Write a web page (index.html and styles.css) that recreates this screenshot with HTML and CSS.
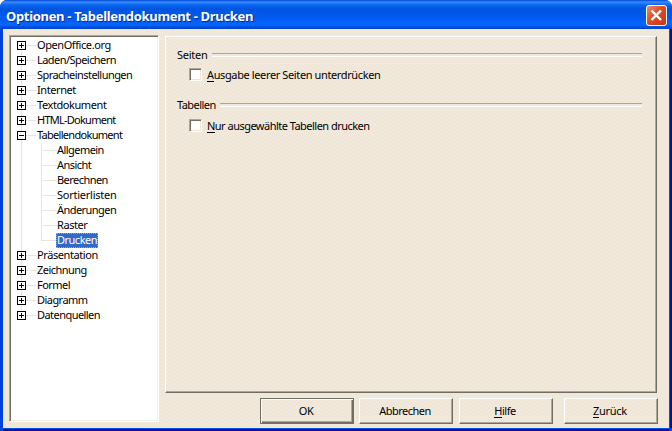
FILE: index.html
```html
<!DOCTYPE html>
<html lang="de">
<head>
<meta charset="utf-8">
<title>Optionen - Tabellendokument - Drucken</title>
<link rel="stylesheet" href="styles.css">
</head>
<body>
<div class="window">
  <header class="titlebar">
    <h1>Optionen - Tabellendokument - Drucken</h1>
    <button class="close" aria-label="Schließen"><svg width="21" height="21" viewBox="0 0 21 21"><path d="M5.5 5.5 15 15M15 5.5 5.5 15" stroke="#fff" stroke-width="2.4"/></svg></button>
  </header>
  <main class="body">
    <svg class="texture" width="666" height="399" aria-hidden="true">
      <defs><pattern id="grain" width="4" height="4" patternUnits="userSpaceOnUse"><path d="M0 0h1v2h-1zM2 0h1v1h-1zM1 2h1v2h-1zM3 1h1v2h-1zM2 3h1v1h-1z" fill="#f3e2d6" shape-rendering="crispEdges"/></pattern></defs>
      <rect width="666" height="399" fill="url(#grain)"/>
    </svg>
    <nav class="tree">
      <ul class="root">
        <li><i class="box plus"></i><span class="loose">OpenOffice.org</span></li>
        <li><i class="box plus"></i><span>Laden/Speichern</span></li>
        <li><i class="box plus"></i><span>Spracheinstellungen</span></li>
        <li><i class="box plus"></i><span class="loose">Internet</span></li>
        <li><i class="box plus"></i><span class="loose">Textdokument</span></li>
        <li><i class="box plus"></i><span class="html">HTML-Dokument</span></li>
        <li><i class="box"></i><span class="tight">Tabellendokument</span></li>
        <li class="sub"><span>Allgemein</span></li>
        <li class="sub"><span>Ansicht</span></li>
        <li class="sub"><span>Berechnen</span></li>
        <li class="sub"><span class="wide">Sortierlisten</span></li>
        <li class="sub"><span>Änderungen</span></li>
        <li class="sub"><span class="loose">Raster</span></li>
        <li class="sub last"><span class="selected">Drucken</span></li>
        <li><i class="box plus"></i><span class="loose">Präsentation</span></li>
        <li><i class="box plus"></i><span>Zeichnung</span></li>
        <li><i class="box plus"></i><span>Formel</span></li>
        <li><i class="box plus"></i><span>Diagramm</span></li>
        <li><i class="box plus"></i><span>Datenquellen</span></li>
      </ul>
    </nav>
    <div class="right">
      <section class="panel">
        <h2 class="wide">Seiten</h2>
        <label><i class="check"></i><span class="leer"><u>A</u>usgabe leerer Seiten unterdrücken</span></label>
        <h2 class="second">Tabellen</h2>
        <label class="lower"><i class="check"></i><span class="nur"><u>N</u>ur ausgewählte Tabellen drucken</span></label>
      </section>
      <footer class="buttons">
        <button class="btn default">OK</button>
        <button class="btn">Abbrechen</button>
        <button class="btn help"><span><u>H</u>ilfe</span></button>
        <button class="btn back"><span><u>Z</u>urück</span></button>
      </footer>
    </div>
  </main>
</div>
</body>
</html>
```

FILE: styles.css
```css
* { box-sizing: border-box; }
body { margin: 0; background: #fff; font: 11px/15px "Noto Sans", "Open Sans", sans-serif; letter-spacing: -.55px; color: #000; overflow: hidden; }
ul, h1, h2 { margin: 0; padding: 0; list-style: none; }
button { font: inherit; color: inherit; letter-spacing: inherit; padding: 0; border: 0; border-radius: 0; }
.wide { letter-spacing: -.25px; }
.loose { letter-spacing: -.42px; }
.tight { letter-spacing: -.7px; }
.html { letter-spacing: -.75px; }
.leer { letter-spacing: -.38px; }
.nur { letter-spacing: -.52px; }
.window { width: 672px; height: 431px; display: flex; flex-direction: column; overflow: hidden; border-radius: 7px 7px 0 0; background: #0042dd; }
.titlebar { height: 29px; flex: none; display: flex; align-items: center; justify-content: space-between; padding: 2px 5px 0 6px;
  background: linear-gradient(#0047d8 0, #3a8cff 2px, #0866ee 5px, #0055e1 9px, #005af0 18px, #0666ff 25px, #0050dc 27px, #003fc9 29px); }
h1 { font: bold 13px/20px "Noto Sans", sans-serif; color: #fff; text-shadow: 1px 1px #0b2c86; letter-spacing: -.32px; }
.close { width: 21px; height: 21px; border: 1px solid #fff; border-radius: 3px; background: linear-gradient(135deg, #ec8d70, #dc4d28 45%, #c93410); }
.close svg { display: block; margin: -1px; }
.body { position: relative; flex: 1; margin: 0 3px 3px; display: flex; padding: 6px 11px 3px 6px; background: #edecdd; box-shadow: 0 1px #0050e8, 0 3px #001590, 1px 0 #0050e8, 3px 0 #001590; }
.texture { position: absolute; inset: 0; }
.tree, .right { position: relative; }
.tree { width: 150px; height: 387px; background: #fff; border: 1px solid; border-color: #aca899 #fff #fff #aca899; box-shadow: inset 1px 1px #716f64, inset -1px -1px #f1efe2; padding: 2px 0 0 7px; }
.root li { height: 15px; display: flex; align-items: center; white-space: nowrap; }
.root li::before { content: ""; width: 1px; height: 15px; margin-left: 4px; background: #ece4d8; flex: none; }
.root li:first-child::before { height: 8px; align-self: flex-end; }
.root li:last-child::before { height: 8px; align-self: flex-start; }
.root li::after { content: ""; order: 1; width: 10px; height: 1px; margin-left: 5px; background: #ece4d8; flex: none; }
.root span { order: 2; margin: -2px 0 0 1px; }
.box { width: 9px; height: 9px; margin: -1px -5px 0 -5px; border: 1px solid #000; background: linear-gradient(#000, #000) center / 5px 1px no-repeat #fff; flex: none; z-index: 1; }
.plus { background: linear-gradient(#000, #000) center / 5px 1px no-repeat, linear-gradient(#000, #000) center / 1px 5px no-repeat, #fff; }
.root .sub::after { width: 15px; height: 15px; margin-left: 19px; border-left: 1px solid #ece4d8; background: linear-gradient(#ece4d8, #ece4d8) 0 7px / 15px 1px no-repeat; }
.root .last::after { height: 8px; align-self: flex-start; }
.root .sub span { margin-left: 0; }
.root .sub .selected { height: 15px; margin: -1px 0 0 -1px; padding: 0 1px; line-height: 14px; background: #316ac5; color: #fff; outline: 1px dotted #d8a03a; outline-offset: -1px; letter-spacing: -.5px; }
.right { flex: 1; margin-left: 6px; }
.panel { width: 492px; height: 357px; margin-top: 1px; padding: 10px 14px 0 11px; border: 1px solid; border-color: #fff #716f64 #716f64 #fff; box-shadow: inset -1px -1px #aca899; }
h2 { font: inherit; display: flex; align-items: center; gap: 4px; }
h2::after { content: ""; flex: 1; height: 2px; margin-top: 1px; border-top: 1px solid #aca899; border-bottom: 1px solid #fff; }
.second { margin-top: 15px; }
label { display: flex; align-items: center; gap: 5px; height: 16px; margin: 4px 0 0 12px; }
.lower { margin-top: 5px; }
.check { width: 13px; height: 13px; margin-top: 0; background: #fff; border: 1px solid; border-color: #aca899 #fff #fff #aca899; box-shadow: inset 1px 1px #716f64, inset -1px -1px #f1e5d8; }
u { text-decoration: none; box-shadow: 0 1px #000; display: inline-block; line-height: 12px; }
.buttons { display: flex; margin: 5px 0 0 95px; letter-spacing: -.5px; }
.btn { width: 94px; height: 26px; background: transparent; border: 1px solid; border-color: #fff #716f64 #716f64 #fff; box-shadow: inset -1px -1px #aca899; margin-right: 5px; padding: 0 2px 1px 0; flex: none; }
.default { border-color: #716f64; box-shadow: inset 1px 1px #fff, inset -1px -1px #716f64, inset -2px -2px #aca899; }
.help { margin: 0 11px 0 1px; }
.back { margin: 0; letter-spacing: -.3px; }
```
